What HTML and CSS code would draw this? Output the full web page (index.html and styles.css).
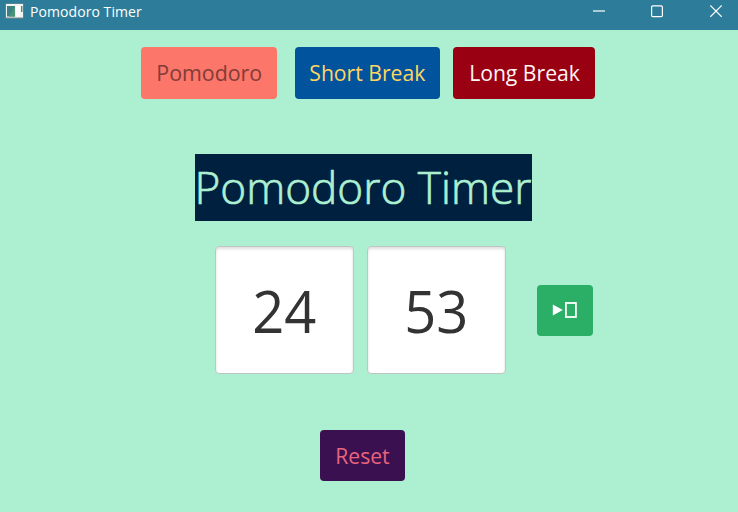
FILE: index.html
```html
<!DOCTYPE html>
<html lang="en">
<head>
<meta charset="utf-8">
<title>Pomodoro Timer</title>
<link rel="stylesheet" href="styles.css">
</head>
<body>
<header class="titlebar">
  <svg class="app-icon" width="19" height="16" viewBox="0 0 19 16">
    <rect x="0.5" y="0.5" width="18" height="15" fill="#7d8b8e"/>
    <rect x="1" y="1" width="17" height="13.5" fill="#f1f3f2"/>
    <rect x="2" y="3" width="8" height="10.5" fill="#3a8085"/>
    <path d="M10 3v10.500H4z" fill="#489475"/>
    <rect x="11" y="3" width="4" height="10.500" fill="#fff"/>
    <rect x="16" y="3" width="1.500" height="6" fill="#548d80"/>
  </svg>
  <span class="caption">Pomodoro Timer</span>
  <div class="controls">
    <svg width="12" height="13" viewBox="0 0 12 13"><path d="M0 6h12"/></svg>
    <svg width="12" height="13" viewBox="0 0 12 13"><rect x="0.600" y="0.800" width="10.800" height="10.800" rx="1.200"/></svg>
    <svg class="close" width="12" height="13" viewBox="0 0 12 13"><path d="M0.300 0.500l11.400 11.400M11.700 0.500L0.300 11.900"/></svg>
  </div>
</header>
<main>
  <nav class="modes">
    <button class="btn pomodoro"><span>Pomodoro</span></button>
    <button class="btn short"><span>Short Break</span></button>
    <button class="btn long"><span>Long Break</span></button>
  </nav>
  <h1><span>Pomodoro Timer</span></h1>
  <section class="clock">
    <div class="digits minutes"><span>24</span></div>
    <div class="digits seconds"><span>53</span></div>
    <button class="btn start" aria-label="Start">
      <svg width="26" height="18" viewBox="0 0 26 18">
        <path d="M0.800 3.500v11L10.800 9z" fill="#fff"/>
        <rect x="13.900" y="2" width="10" height="14" fill="none" stroke="#fff" stroke-width="1.800"/>
      </svg>
    </button>
  </section>
  <button class="btn reset"><span>Reset</span></button>
</main>
</body>
</html>
```

FILE: styles.css
```css
* {
  box-sizing: border-box;
}

body {
  margin: 0;
  height: 512px;
  overflow: hidden;
  background: #adf0d1;
  font-family: "Open Sans", "Noto Sans", sans-serif;
}

.titlebar {
  display: flex;
  align-items: center;
  height: 30px;
  padding: 0 16px 8px 5px;
  background: #2d7d9a;
  color: #fff;
}

.app-icon {
  flex: none;
  margin-right: 6px;
}

.caption {
  font-size: 14px;
  line-height: 20px;
  padding-top: 1px;
  letter-spacing: 0.07px;
  white-space: nowrap;
}

.controls {
  display: flex;
  gap: 46px;
  margin-left: auto;
}

.controls svg {
  fill: none;
  stroke: #fff;
  stroke-width: 1.2;
}

.controls .close {
  margin-left: 1px;
}

main {
  display: flex;
  flex-direction: column;
  align-items: flex-start;
  padding-top: 17.4px;
}

.btn {
  display: flex;
  align-items: center;
  justify-content: center;
  height: 51.5px;
  padding: 0;
  border: 0;
  border-radius: 4px;
  font: 400 22.5px/30px "Open Sans", "Noto Sans", sans-serif;
  white-space: nowrap;
}

.btn span {
  transform: translateX(0.6px) scaleX(0.94);
}

.modes {
  display: flex;
  margin-left: 141px;
}

.pomodoro {
  width: 136px;
  background: #fc766a;
  color: #813c38;
}

.pomodoro span {
  transform: translateX(0.5px) scaleX(0.95);
}

.short {
  width: 145.4px;
  margin-left: 17.5px;
  background: #00539c;
  color: #ffd662;
}

.long {
  width: 142px;
  margin-left: 13.5px;
  background: #990011;
  color: #fcf6f5;
}

h1 {
  width: 337px;
  height: 67px;
  margin: 55px 0 0 195px;
  background: #00203f;
  color: #adefd1;
  font-size: 45px;
  font-weight: 300;
  line-height: 66px;
  white-space: nowrap;
}

h1 span {
  display: inline-block;
  transform: translateX(-0.5px) scaleX(0.981);
  transform-origin: left;
  -webkit-text-stroke: 0.7px #adefd1;
}

.clock {
  display: flex;
  align-items: center;
  margin: 25.500px 0 0 215px;
}

.digits {
  width: 139px;
  height: 128px;
  border: 1.500px solid #c0c4c2;
  border-radius: 4px;
  background: #fff;
  box-shadow: inset 0 2px 3px #0002;
  color: #333;
  font-size: 59px;
  font-weight: 400;
  line-height: 126px;
  text-align: center;
}

.digits span {
  display: inline-block;
  transform: translateX(-0.5px) scaleX(0.95);
}

.seconds {
  margin-left: 13px;
}

.start {
  width: 56.400px;
  height: 50.500px;
  margin-left: 31px;
  background: #2bae66;
}

.reset {
  width: 85px;
  margin: 55.500px 0 0 320px;
  background: #3b1050;
  color: #e8647c;
}

.reset span {
  transform: translateX(-0.5px) scaleX(0.94);
}
```
